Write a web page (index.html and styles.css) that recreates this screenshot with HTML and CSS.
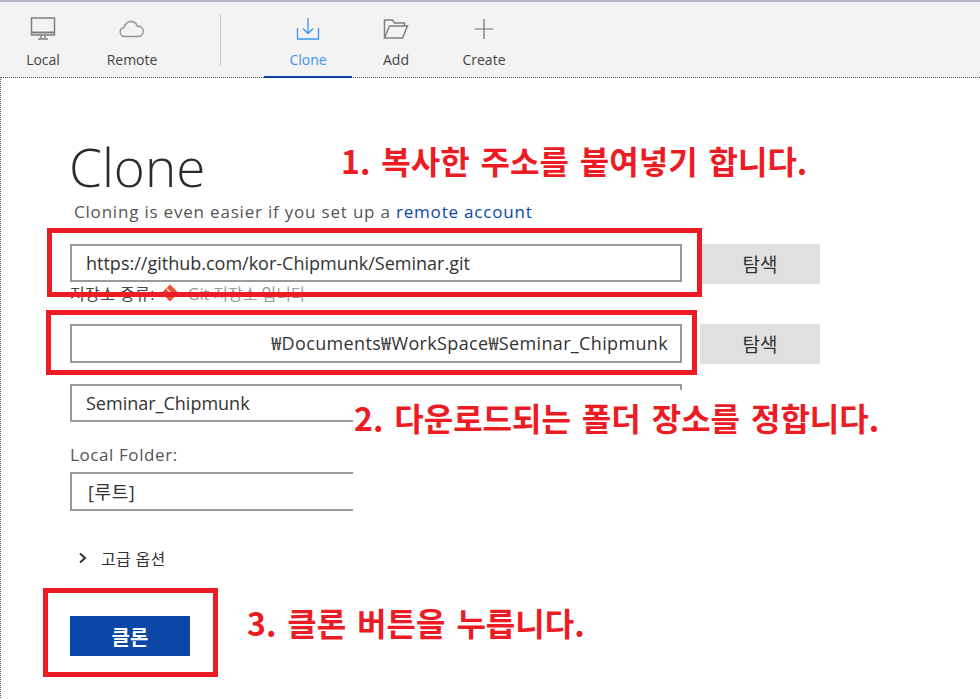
FILE: index.html
```html
<!DOCTYPE html>
<html lang="ko">
<head>
    <meta charset="UTF-8">
    <title>Clone</title>
    <link rel="stylesheet" href="styles.css">
</head>
<body>
    <nav class="toolbar">
        <a class="tool tool-local">
            <svg width="26" height="24" viewBox="0 0 26 24" fill="none" stroke="#808080" stroke-width="1.5"><path d="M1.5 1h23v17h-23z"/><path d="M1.5 15.5h23" stroke-width="2"/><path d="M11 18v3M15 18v3M8 22h10"/></svg>
            <span>Local</span>
        </a>
        <a class="tool tool-remote">
            <svg width="26" height="24" viewBox="0 0 26 24" fill="none" stroke="#909090" stroke-width="1.3"><path d="M6 19.5c-3 0-4.800-2-4.800-4.500 0-2.300 1.800-4 3.800-4.300C6 7 9 4.500 12 4.500c3.300 0 5.500 2.200 6.300 4.800 3.400-.3 6 2 6 5 0 2.800-2.200 5.200-5 5.200z"/></svg>
            <span>Remote</span>
        </a>
        <div class="divider"></div>
        <a class="tool tool-clone active">
            <svg width="24" height="24" viewBox="0 0 24 24" fill="none" stroke="#3c93f0" stroke-width="1.3"><path d="M12 1v15M7 11.500l5 5 5-5"/><path d="M1.500 11v11h21V11"/></svg>
            <span>Clone</span>
        </a>
        <a class="tool tool-add">
            <svg width="26" height="24" viewBox="0 0 26 24" fill="none" stroke="#808080" stroke-width="1.5"><path d="M1.500 21V3h8l2 3h10v3"/><path d="M1.500 21h18l5-12H6.500z"/></svg>
            <span>Add</span>
        </a>
        <a class="tool tool-create">
            <svg width="24" height="24" viewBox="0 0 24 24" fill="none" stroke="#707070" stroke-width="1.200"><path d="M12 2v20M2.500 12h19"/></svg>
            <span>Create</span>
        </a>
    </nav>

    <main class="page">
        <h1 class="title">Clone</h1>
        <p class="subtitle">Cloning is even easier if you set up a <a class="link">remote account</a></p>

        <div class="row row-url">
            <div class="field">https://github.com/kor-Chipmunk/Seminar.git</div>
            <button class="browse">탐색</button>
        </div>
        <div class="repo-type">
            <span class="repo-label">저장소 종류:</span>
            <svg width="18" height="18" viewBox="0 0 18 18"><path d="M9 .5 17.500 9 9 17.500.5 9z" fill="#f05133"/><path d="M6 5l3 3M9 8v5M9 8l3 2" stroke="#fff" stroke-width="1.200"/></svg>
            <span class="repo-note">Git 저장소 입니다</span>
        </div>
        <div class="row row-path">
            <div class="field field-path">₩Documents₩WorkSpace₩Seminar_Chipmunk</div>
            <button class="browse">탐색</button>
        </div>
        <div class="row row-name">
            <div class="field">Seminar_Chipmunk</div>
        </div>
        <label class="folder-label">Local Folder:</label>
        <div class="row">
            <div class="field field-root">[루트]</div>
        </div>
        <div class="advanced">
            <svg width="10" height="12" viewBox="0 0 10 12" fill="none" stroke="#333" stroke-width="2"><path d="M2 1.500 7 6l-5 4.500"/></svg>
            <span>고급 옵션</span>
        </div>
        <button class="submit">클론</button>
    </main>

    <!-- annotations pasted over the screenshot -->
    <div class="mark mark-url"></div>
    <div class="mark mark-path"></div>
    <div class="mark mark-submit"></div>
    <div class="note note-1">1. 복사한 주소를 붙여넣기 합니다.</div>
    <div class="note-patch"><div class="note note-2">2. 다운로드되는 폴더 장소를 정합니다.</div></div>
    <div class="note note-3">3. 클론 버튼을 누릅니다.</div>
</body>
</html>
```

FILE: styles.css
```css
* {
    box-sizing: border-box;
}
html, body {
    height: 699px;
    overflow: hidden;
}
body {
    margin: 0;
    position: relative;
    background-color: #fff;
    color: #333;
    font-family: "Open Sans", "Noto Sans CJK KR", sans-serif;
}

/* top toolbar */
.toolbar {
    display: flex;
    height: 78px;
    background-color: #f3f3f3;
    border-top: 2px solid #b4b8c0;
}
.tool {
    display: flex;
    flex-direction: column;
    align-items: center;
    width: 88px;
    padding-top: 15px;
    font-size: 14px;
    color: #444;
}
.tool svg {
    height: 24px;
    flex: none;
}
.tool span {
    margin-top: 9px;
    line-height: 19px;
}
.tool-local {
    width: 86px;
}
.tool-remote {
    width: 92px;
}
.divider {
    width: 1px;
    height: 52px;
    margin: 12px 43px 0 42px;
    background-color: #c8c8c8;
}
.tool.active {
    color: #3c93f0;
    border-bottom: 2px solid #0a47a6;
}

/* form */
.page {
    height: 621px;
    padding: 56px 0 0 69px;
    border-top: 1px dotted #555;
    border-left: 1px dotted #555;
    margin-top: -1px;
}
.title {
    margin: 0 0 0 -1px;
    font-size: 53px;
    font-weight: 300;
    line-height: 66px;
    color: #2b2b2b;
}
.subtitle {
    margin: 0 0 0 4px;
    font-size: 17px;
    letter-spacing: 0.8px;
    line-height: 24px;
    color: #555;
}
.link {
    color: #0a47a6;
}
.row {
    display: flex;
    align-items: flex-start;
}
.row-url {
    margin-top: 20px;
}
.row-path {
    margin-top: 21px;
}
.row-name {
    margin-top: 20px;
}
.field {
    width: 612px;
    height: 38px;
    padding: 0 14px;
    border: 2px solid #999;
    font-size: 18px;
    line-height: 34px;
    color: #333;
    white-space: nowrap;
    background-color: #fff;
}
.field-path {
    text-align: right;
    height: 39px;
    padding-right: 12px;
    letter-spacing: 0.35px;
}
.browse {
    width: 120px;
    height: 40px;
    margin-left: 18px;
    border: 0;
    background-color: #e0e0e0;
    font-family: inherit;
    font-size: 19px;
    color: #333;
}
.repo-type {
    display: flex;
    align-items: center;
    gap: 6px;
    height: 20px;
    margin-top: -1px;
    font-size: 16px;
    color: #444;
}
.repo-label {
    letter-spacing: 0.4px;
}
.repo-note {
    color: #999;
    margin-left: 3px;
}
.folder-label {
    display: block;
    margin-top: 19px;
    font-size: 17px;
    letter-spacing: 0.6px;
    line-height: 28px;
    color: #555;
}
.field-root {
    height: 39px;
    padding-left: 16px;
    margin-top: 3px;
    line-height: 36px;
    letter-spacing: 0.6px;
}
.advanced {
    display: flex;
    align-items: center;
    gap: 13px;
    margin: 35px 0 0 8px;
    height: 24px;
    font-size: 16px;
    letter-spacing: 0.3px;
    color: #333;
}
.submit {
    display: block;
    width: 120px;
    height: 40px;
    margin-top: 46px;
    border: 0;
    background-color: #0a47a6;
    color: #fff;
    font-family: inherit;
    font-size: 20px;
    font-weight: 700;
}

/* red marks */
.mark {
    position: absolute;
    border: 5px solid #ed1c24;
}
.mark-url {
    left: 47px;
    top: 228px;
    width: 655px;
    height: 69px;
}
.mark-path {
    left: 46px;
    top: 310px;
    width: 651px;
    height: 65px;
}
.mark-submit {
    left: 43px;
    top: 588px;
    width: 175px;
    height: 89px;
}
.note {
    position: absolute;
    font-family: "Noto Sans CJK KR", sans-serif;
    font-size: 32px;
    font-weight: 700;
    line-height: 40px;
    word-spacing: 2px;
    color: #ed1c24;
    white-space: nowrap;
}
.note-1 {
    left: 341px;
    top: 140px;
}
.note-3 {
    left: 247px;
    top: 602px;
}
.note-patch {
    position: absolute;
    left: 353px;
    top: 390px;
    width: 627px;
    height: 130px;
    background-color: #fff;
}
.note-2 {
    left: 1px;
    top: 7px;
}
```
